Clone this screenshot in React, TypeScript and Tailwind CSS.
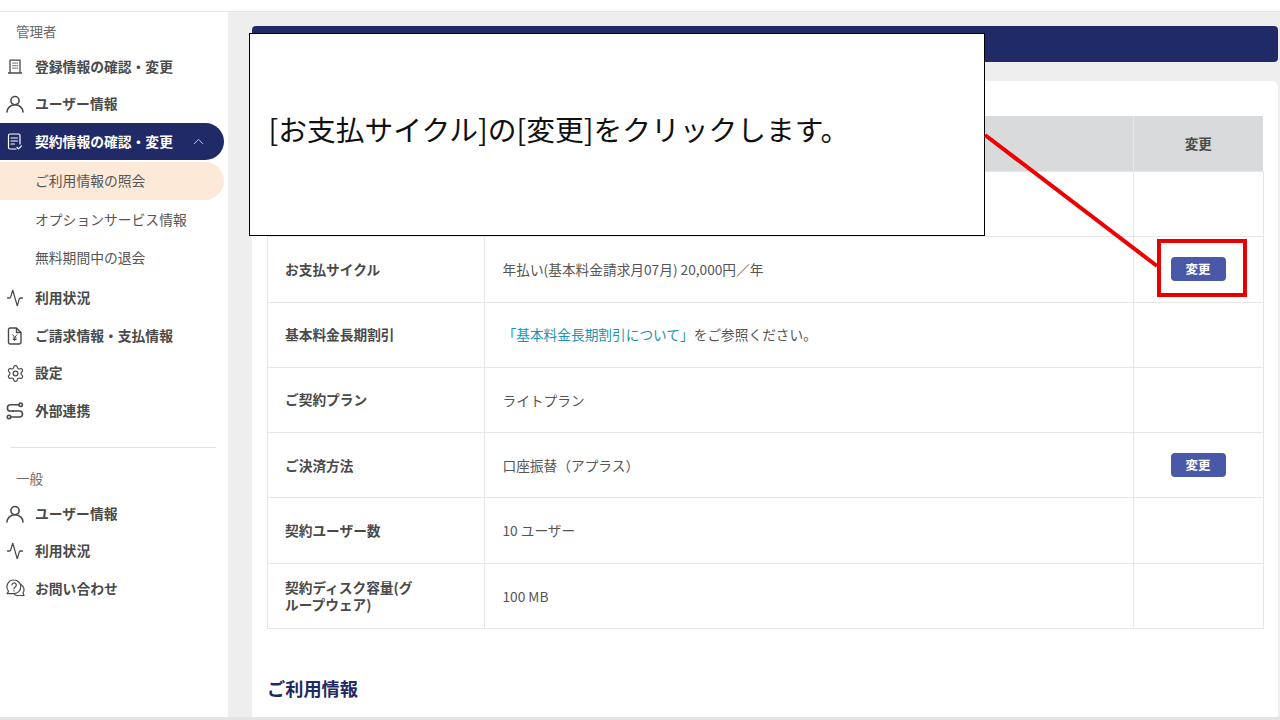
import { Activity, ChevronUp, Settings } from "lucide-react";
import React from "react";

const FONT = "font-['Noto_Sans_CJK_JP','Noto_Sans',sans-serif]";

function BuildingIcon() {
  return (
    <svg width="16" height="16" viewBox="0 0 16 16" fill="none" stroke="currentColor" strokeWidth="1.3">
      <path d="M3 1.200h10v12.800H3zM1 14h14" />
      <path d="M5.500 4.200h1.200M7.500 4.200h1.200M9.500 4.200h1.200M5.500 6.700h1.200M7.500 6.700h1.200M9.500 6.700h1.200M5.500 9.200h1.200M7.500 9.200h1.200M9.500 9.200h1.200" strokeWidth="1.200" />
    </svg>
  );
}

function UserIcon() {
  return (
    <svg width="18" height="18" viewBox="0 0 18 18" fill="none" stroke="currentColor" strokeWidth="1.6" strokeLinecap="round">
      <circle cx="9" cy="5.600" r="4.100" />
      <path d="M1 17c.3-4 3.500-7.200 8-7.200s7.700 3.200 8 7.200" />
    </svg>
  );
}

function ContractIcon() {
  return (
    <svg width="18" height="18" viewBox="0 0 18 18" fill="none" stroke="currentColor" strokeWidth="1.2" strokeLinecap="round" strokeLinejoin="round">
      <path d="M10 16H4a1.500 1.500 0 0 1-1.500-1.500v-12A1.500 1.500 0 0 1 4 1h8.500A1.500 1.500 0 0 1 14 2.500V11" />
      <path d="M5 5h6.500M5 8h6.500M5 11h3.500M11 14.500l1.500 1.300 3-3" />
    </svg>
  );
}

function BillIcon() {
  return (
    <svg width="16" height="18" viewBox="0 0 16 18" fill="none" stroke="currentColor" strokeWidth="1.4" strokeLinejoin="round">
      <path d="M3 1h6.500l4.500 4.500V15a2 2 0 0 1-2 2H3a1.500 1.500 0 0 1-1.500-1.500v-13A1.500 1.500 0 0 1 3 1z" />
      <path d="M9.500 1v4.500H14" />
      <path d="M5.500 7.500L7.700 10.500 10 7.500M7.700 10.500V14M5.800 11h3.800M5.800 12.500h3.800" strokeWidth="1" />
    </svg>
  );
}

function LinkIcon() {
  return (
    <svg width="18" height="18" viewBox="0 0 18 18" fill="none" stroke="currentColor" strokeWidth="1.6" strokeLinecap="round">
      <circle cx="14.700" cy="2.700" r="1.700" />
      <circle cx="3" cy="15" r="1.700" />
      <path d="M13 2.800H4.500a3.100 3.100 0 0 0 0 6.200h9a3 3 0 0 1 0 6H4.800" />
      <circle cx="7" cy="9" r="1" fill="currentColor" stroke="none" />
    </svg>
  );
}

function HelpIcon() {
  return (
    <svg width="19" height="18" viewBox="0 0 19 18" fill="none" stroke="currentColor" strokeWidth="1.200" strokeLinecap="round" strokeLinejoin="round">
      <path d="M8 1a6.800 6.800 0 0 1 0 13.600H1.200l1.300-2.500A6.800 6.800 0 0 1 8 1z" />
      <path d="M15 5.500a6 6 0 0 1 2 8.500l1 2.500h-6.500a6 6 0 0 1-3-1" />
      <path d="M5.900 6a2.200 2.200 0 1 1 3.300 2c-.8.500-1.200.9-1.200 1.800M8 11.700v.2" />
    </svg>
  );
}

function NavItem({ icon, label, className = "h-[37.4px]" }: { icon: React.ReactNode; label: string; className?: string }) {
  return (
    <div className={`flex items-center text-[#4a4a4a] ${className}`}>
      <span className="flex w-[35px] justify-center pl-[1px] pr-[6px]">{icon}</span>
      <span className="text-[13.8px] font-bold leading-none">{label}</span>
    </div>
  );
}

function SubItem({ label, active }: { label: string; active?: boolean }) {
  return (
    <div className={`flex items-center pl-[35px] text-[13.8px] leading-none text-[#555555] ${active ? "h-[38px] rounded-r-full bg-[#fde9d8] mr-[4px] mt-[2px]" : "h-[38.700px]"}`}>
      {label}
    </div>
  );
}

function Sidebar() {
  return (
    <aside className="w-[228px] shrink-0 bg-white pt-[9px]">
      <div className="flex h-[22px] items-center pl-[16px] text-[13.5px] leading-none text-[#6a6a6a]">管理者</div>
      <div className="mt-[5px]">
        <NavItem icon={<BuildingIcon />} label="登録情報の確認・変更" />
        <NavItem icon={<UserIcon />} label="ユーザー情報" />
      </div>
      <div className="mr-[4px] mt-[0.5px] flex h-[37px] items-center rounded-r-full bg-[#1f2a66] text-white">
        <span className="flex w-[35px] justify-center pl-[1px] pr-[6px]"><ContractIcon /></span>
        <span className="text-[13.8px] font-bold leading-none">契約情報の確認・変更</span>
        <ChevronUp className="ml-[17px] text-[#e2e4f0]" size={17} strokeWidth={1.2} />
      </div>
      <SubItem label="ご利用情報の照会" active />
      <SubItem label="オプションサービス情報" />
      <SubItem label="無料期間中の退会" />
      <NavItem icon={<Activity size={18} strokeWidth={1.7} />} label="利用状況" className="h-[38px] mt-[1px]" />
      <NavItem icon={<BillIcon />} label="ご請求情報・支払情報" className="h-[37.4px] mt-[0.6px]" />
      <NavItem icon={<Settings size={19} strokeWidth={1.5} />} label="設定" />
      <NavItem icon={<LinkIcon />} label="外部連携" />
      <div className="mx-[10px] mr-[12px] mt-[18px] h-px bg-[#e4e4e4]" />
      <div className="mt-[19px] flex h-[22px] items-center pl-[16px] text-[13.5px] leading-none text-[#6a6a6a]">一般</div>
      <div className="mt-[5.500px]">
        <NavItem icon={<UserIcon />} label="ユーザー情報" />
        <NavItem icon={<Activity size={18} strokeWidth={1.7} />} label="利用状況" />
        <NavItem icon={<HelpIcon />} label="お問い合わせ" />
      </div>
    </aside>
  );
}

function ChangeButton() {
  return (
    <span className="inline-flex h-[24px] w-[55px] items-center justify-center rounded-[4px] bg-[#4a58a8] text-[12.500px] font-bold leading-none text-white">
      変更
    </span>
  );
}

const rows: { label: React.ReactNode; value: React.ReactNode; change?: boolean; h: string }[] = [
  { label: "", value: "", h: "h-[65.500px]" },
  { label: "お支払サイクル", value: "年払い(基本料金請求月07月) 20,000円／年", change: true, h: "h-[65.500px]" },
  {
    label: "基本料金長期割引",
    value: (
      <>
        <span className="text-[#1b93b5]">「基本料金長期割引について」</span>をご参照ください。
      </>
    ),
    h: "h-[65.300px]",
  },
  { label: "ご契約プラン", value: "ライトプラン", h: "h-[65.300px]" },
  { label: "ご決済方法", value: "口座振替（アプラス）", change: true, h: "h-[65.300px]" },
  { label: "契約ユーザー数", value: "10 ユーザー", h: "h-[65.300px]" },
  { label: "契約ディスク容量(グループウェア)", value: "100 MB", h: "h-[65.300px]" },
];

function ContractTable() {
  return (
    <table className="w-[997px] table-fixed border-collapse text-[13.7px] text-[#555555]">
      <thead>
        <tr className="h-[55px] bg-[#d9dadc]">
          <th className="w-[217px] border-r border-[#e6e7e9]" />
          <th className="w-[649px] border-r border-[#e6e7e9]" />
          <th className="text-center text-[13.6px] font-bold text-[#4a4a4a]">変更</th>
        </tr>
      </thead>
      <tbody>
        {rows.map((row, i) => (
          <tr key={i} className={row.h}>
            <td className="border border-[#e6e7e9] pl-[17.500px] pr-[60px] text-[13.7px] font-bold leading-[17px] text-[#4a4a4a]">{row.label}</td>
            <td className="border border-[#e6e7e9] pl-[18px]">{row.value}</td>
            <td className="border border-[#e6e7e9] text-center align-middle">
              {row.change && <ChangeButton />}
            </td>
          </tr>
        ))}
      </tbody>
    </table>
  );
}

export default function App() {
  return (
    <div className={`relative flex h-[720px] w-[1280px] flex-col overflow-hidden bg-white ${FONT}`}>
      <div className="h-[12px] shrink-0 border-b border-[#e8e8e8] bg-white" />
      <div className="flex min-h-0 flex-1">
        <Sidebar />
        <main className="flex min-w-0 flex-1 flex-col bg-[#eeeeee] pl-[24px] pr-[2px]">
          <div className="mt-[14px] h-[36px] shrink-0 rounded-[4px] bg-[#1f2a66]" />
          <div className="mt-[19px] min-h-0 flex-1 rounded-t-[6px] bg-white pl-[15px] pt-[35px]">
            <div className="-ml-[0.5px]">
              <ContractTable />
            </div>
            <h2 className="mt-[50px] text-[18.2px] font-bold leading-none text-[#1f2a66]">ご利用情報</h2>
          </div>
        </main>
      </div>
      <div className="h-[3px] shrink-0 bg-[#e4e4e4]" />

      {/* callout laid over the page */}
      <div className="absolute left-[249px] top-[33px] flex h-[203px] w-[736px] items-center border border-black bg-white pb-[10px] pl-[18.500px] text-[28.75px] leading-none text-[#111111]">
        [お支払サイクル]の[変更]をクリックします。
      </div>
      <svg className="absolute left-0 top-0" width="1280" height="720" fill="none">
        <path d="M985 135L1157 266" stroke="#ee0000" strokeWidth="4" />
      </svg>
      <div className="absolute left-[1157px] top-[239px] h-[58px] w-[90px] border-[4px] border-[#e60000]" />
    </div>
  );
}
